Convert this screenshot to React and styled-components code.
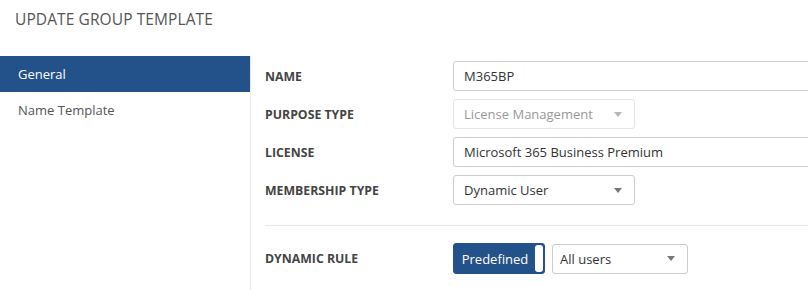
import React from 'react';
import styled, { createGlobalStyle } from 'styled-components';

const GlobalStyle = createGlobalStyle`
  html, body {
    margin: 0;
    padding: 0;
    background: #ffffff;
    overflow: hidden;
  }
  body {
    font-family: "Open Sans", "Noto Sans", Arial, sans-serif;
  }
`;

const Page = styled.div`
  width: 808px;
  height: 290px;
  overflow: hidden;
`;

const Header = styled.div`
  height: 56px;
  box-sizing: border-box;
  padding: 8px 0 0 15px;
  font-size: 15.5px;
  color: #555555;
  letter-spacing: 0.1px;
`;

const Body = styled.div`
  display: flex;
  flex-flow: row nowrap;
  height: 234px;
`;

const Sidebar = styled.div`
  width: 250px;
  flex: none;
  border-right: 1px solid #e6e6e6;
`;

const NavItem = styled.div`
  height: 36px;
  display: flex;
  align-items: center;
  padding-left: 18px;
  font-size: 13px;
  color: #555555;

  ${props => props.active && `
    background-color: #23518a;
    color: #ffffff;
  `}
`;

const Main = styled.div`
  flex: 1;
  padding: 5px 0 0 14px;
  min-width: 0;
`;

const Row = styled.div`
  display: grid;
  grid-template-columns: 188px auto;
  align-items: center;
  height: 30px;
  margin-bottom: 8px;
`;

const Label = styled.div`
  font-size: 12.3px;
  font-weight: 700;
  color: #444444;
`;

const Field = styled.div`
  box-sizing: border-box;
  height: 30px;
  width: ${props => props.width}px;
  border: 1px solid ${props => (props.disabled ? '#e4e4e4' : '#cccccc')};
  border-radius: 3px;
  display: flex;
  align-items: center;
  padding: 0 12px 0 10px;
  font-size: 13px;
  color: ${props => (props.disabled ? '#999999' : '#333333')};
  background: #ffffff;
`;

const FieldText = styled.span`
  flex: 1;
  white-space: nowrap;
`;

const Caret = styled.span`
  width: 0;
  height: 0;
  border-left: 4px solid transparent;
  border-right: 4px solid transparent;
  border-top: 5px solid ${props => (props.disabled ? '#b5b5b5' : '#777777')};
`;

const Divider = styled.div`
  height: 1px;
  background: #e8e8e8;
  margin: 20px 0 17px;
`;

const RuleControls = styled.div`
  display: flex;
  flex-flow: row nowrap;
  gap: 7px;
  align-items: center;
`;

const Toggle = styled.div`
  box-sizing: border-box;
  width: 92px;
  height: 31px;
  border: 1px solid #23518a;
  border-radius: 3px;
  background: #23518a;
  display: flex;
  align-items: stretch;
  overflow: hidden;
`;

const ToggleLabel = styled.span`
  flex: 1;
  display: flex;
  align-items: center;
  justify-content: center;
  color: #ffffff;
  font-size: 13px;
  padding-left: 2px;
`;

const Knob = styled.span`
  width: 8px;
  background: #ffffff;
  border-radius: 3px;
  margin: 1px;
`;

const RuleSelect = styled(Field)`
  padding-left: 7px;
`;

function SelectField({ value, width, disabled, as }) {
  const Box = as || Field;
  return (
    <Box width={width} disabled={disabled}>
      <FieldText>{value}</FieldText>
      <Caret disabled={disabled} />
    </Box>
  );
}

export default function App() {
  return (
    <Page>
      <GlobalStyle />
      <Header>UPDATE GROUP TEMPLATE</Header>
      <Body>
        <Sidebar>
          <NavItem active>General</NavItem>
          <NavItem>Name Template</NavItem>
        </Sidebar>
        <Main>
          <Row>
            <Label>NAME</Label>
            <Field width={380}><FieldText>M365BP</FieldText></Field>
          </Row>
          <Row>
            <Label>PURPOSE TYPE</Label>
            <SelectField value="License Management" width={182} disabled />
          </Row>
          <Row>
            <Label>LICENSE</Label>
            <Field width={380}><FieldText>Microsoft 365 Business Premium</FieldText></Field>
          </Row>
          <Row>
            <Label>MEMBERSHIP TYPE</Label>
            <SelectField value="Dynamic User" width={182} />
          </Row>
          <Divider />
          <Row>
            <Label>DYNAMIC RULE</Label>
            <RuleControls>
              <Toggle>
                <ToggleLabel>Predefined</ToggleLabel>
                <Knob />
              </Toggle>
              <SelectField value="All users" width={136} as={RuleSelect} />
            </RuleControls>
          </Row>
        </Main>
      </Body>
    </Page>
  );
}
